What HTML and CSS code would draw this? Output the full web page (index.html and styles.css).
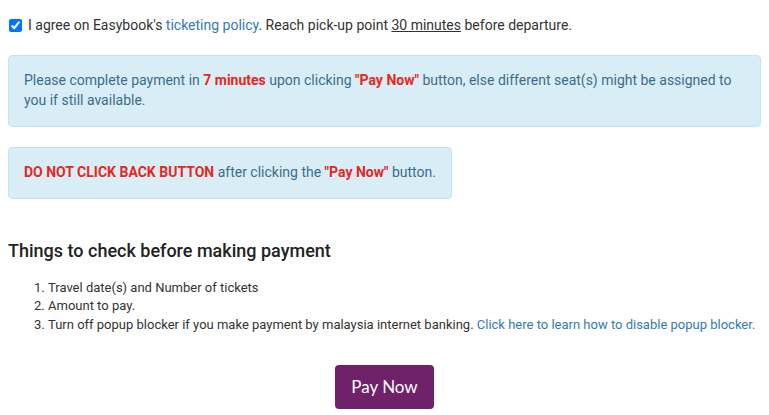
FILE: index.html
```html
<!DOCTYPE html>
<html lang="en">
<head>
  <meta charset="UTF-8">
  <meta name="viewport" content="width=device-width, initial-scale=1.0">
  <title>Payment</title>
  <link rel="stylesheet" href="styles.css">
</head>
<body>
  <div class="agree">
    <input type="checkbox" id="agree" checked>
    <label for="agree">I agree on Easybook's <a href="#">ticketing policy</a>. Reach pick-up point <u>30 minutes</u> before departure.</label>
  </div>

  <div class="alert">
    Please complete payment in <span class="warn">7 minutes</span> upon clicking <span class="warn">"Pay Now"</span> button, else different seat(s) might be assigned to you if still available.
  </div>

  <div class="alert alert-inline">
    <span class="warn">DO NOT CLICK BACK BUTTON</span> after clicking the <span class="warn">"Pay Now"</span> button.
  </div>

  <h3>Things to check before making payment</h3>
  <ol class="checks">
    <li>Travel date(s) and Number of tickets</li>
    <li>Amount to pay.</li>
    <li>Turn off popup blocker if you make payment by malaysia internet banking. <a href="#">Click here to learn how to disable popup blocker.</a></li>
  </ol>

  <div class="actions">
    <button class="pay">Pay Now</button>
  </div>
</body>
</html>
```

FILE: styles.css
```css
body {
  margin: 8px;
  font-family: Roboto, 'Liberation Sans', sans-serif;
  font-size: 14px;
  line-height: 1.42857;
  color: #333;
  background: #fff;
}
a {
  color: #337ab7;
  text-decoration: none;
}
.agree {
  display: flex;
  align-items: center;
  margin-top: 8px;
  margin-bottom: 19px;
}
.agree input {
  margin: 0 6px 0 1px;
  width: 13px;
  height: 13px;
}
.alert {
  padding: 15px;
  margin-bottom: 20px;
  border: 1px solid #bce8f1;
  border-radius: 4px;
  background-color: #d9edf7;
  color: #3a6d8c;
}
.alert-inline {
  display: inline-block;
}
.warn {
  color: #e8261c;
  font-weight: bold;
}
h3 {
  font-size: 18px;
  font-weight: 500;
  color: #222;
  margin: 19px 0 15px;
}
.checks {
  font-size: 13px;
  padding-left: 40px;
  margin: 0 0 31px;
}
.actions {
  text-align: center;
}
.pay {
  background-color: #6f2169;
  color: #fff;
  border: none;
  border-radius: 4px;
  font-family: Lato, sans-serif;
  font-size: 17px;
  line-height: 24px;
  padding: 10px 16px;
  cursor: pointer;
}
```
